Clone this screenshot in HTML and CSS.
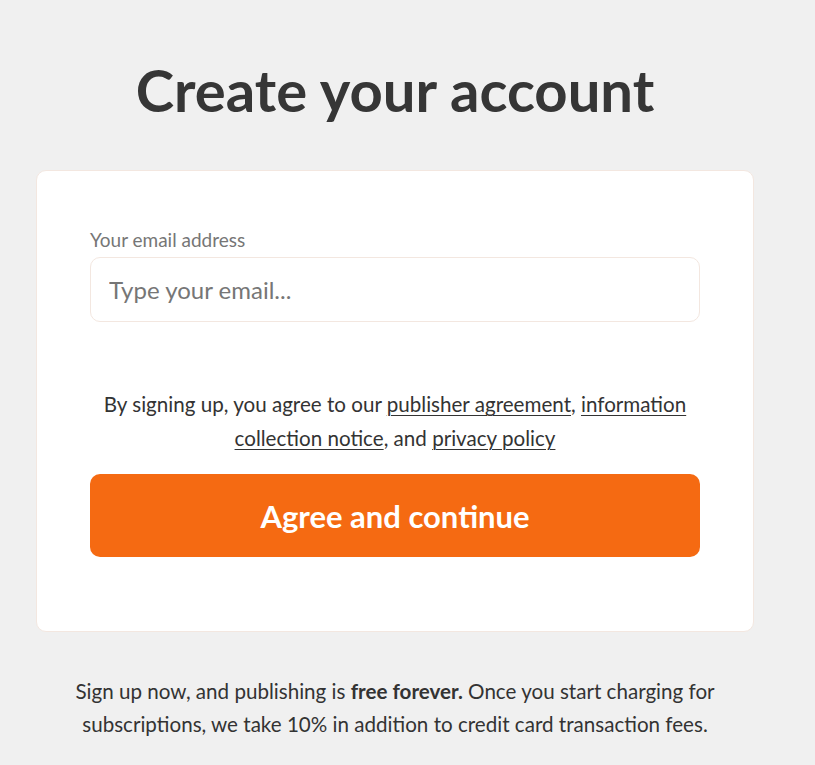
FILE: index.html
```html
<!DOCTYPE html>
<html lang="en">
<head>
<meta charset="utf-8">
<title>Create your account</title>
<link rel="stylesheet" href="styles.css">
</head>
<body>
<main class="page">
  <h1 class="title">Create your account</h1>
  <form class="card">
    <label class="label" for="email">Your email address</label>
    <input class="input" id="email" type="email" placeholder="Type your email..." autofocus>
    <p class="terms">
      <span class="line">By signing up, you agree to our <a href="#" class="link">publisher agreement</a>, <a href="#" class="link">information</a></span>
      <span class="line"><a href="#" class="link">collection notice</a>, and <a href="#" class="link">privacy policy</a></span>
    </p>
    <button class="button" type="button">Agree and continue</button>
  </form>
  <p class="footer">
    <span class="line">Sign up now, and publishing is <strong class="strong">free forever.</strong> Once you start charging for</span>
    <span class="line">subscriptions, we take 10% in addition to credit card transaction fees.</span>
  </p>
</main>
</body>
</html>
```
FILE: styles.css
```css
html, body {
  margin: 0;
  padding: 0;
  background: #f0f0f0;
}
body {
  font-family: "Lato", "Open Sans", sans-serif;
  color: #333333;
}
.page {
  width: 718px;
  margin-left: 36px;
  padding-top: 55px;
}
.title {
  margin: 0;
  font-size: 58px;
  line-height: 70px;
  font-weight: 700;
  color: #363636;
  text-align: center;
}
.card {
  margin-top: 45px;
  background: #ffffff;
  border: 1px solid #f3e7e0;
  border-radius: 10px;
  padding: 57px 53px 74px;
  display: flex;
  flex-direction: column;
}
.label {
  display: block;
  font-size: 19px;
  line-height: 23px;
  color: #767676;
}
.input {
  margin-top: 6px;
  box-sizing: border-box;
  width: 610px;
  height: 65px;
  border: 1px solid #f3e7e0;
  border-radius: 10px;
  padding: 0 18px;
  font-family: "Lato", "Open Sans", sans-serif;
  font-size: 24px;
  color: #333333;
  caret-color: #222222;
  background: #ffffff;
  outline: none;
}
.input::placeholder {
  color: #767676;
  opacity: 1;
}
.line {
  display: block;
}
.terms {
  margin: 65px 0 0;
  font-size: 20.6px;
  line-height: 34px;
  text-align: center;
  color: #333333;
}
.link {
  color: #333333;
  text-decoration: underline;
  text-decoration-thickness: 1px;
  text-underline-offset: 3px;
}
.button {
  margin-top: 19px;
  width: 610px;
  height: 83px;
  border: none;
  border-radius: 10px;
  background: #f56a12;
  color: #ffffff;
  font-family: "Lato", "Open Sans", sans-serif;
  font-size: 31px;
  font-weight: 700;
  padding: 0;
  cursor: pointer;
}
.footer {
  margin: 43px 0 0;
  font-size: 20.6px;
  line-height: 33px;
  text-align: center;
  color: #333333;
}
.strong {
  font-weight: 700;
}
```
